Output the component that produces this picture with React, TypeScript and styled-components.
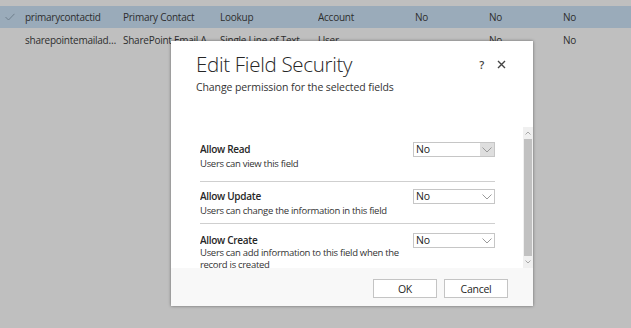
import React from "react";
import styled, { createGlobalStyle } from "styled-components";

const Global = createGlobalStyle`
  html, body { margin: 0; padding: 0; }
  body { background: #bfbfbf; font-family: "Open Sans", "Liberation Sans", sans-serif; letter-spacing: -0.25px; }
  #root { width: 631px; height: 328px; }
`;

const Page = styled.div`
  position: relative;
  width: 631px;
  height: 328px;
  overflow: hidden;
  background: #bfbfbf;
  padding-top: 6px;
  box-sizing: border-box;
`;

const Row = styled.div<{ $selected?: boolean }>`
  display: grid;
  grid-template-columns: 25px 98px 97px 98px 97px 74px 74px 1fr;
  height: 22px;
  align-items: center;
  background: ${(p) => (p.$selected ? "#9aabba" : "transparent")};
  & + & { height: 24px; }
`;

const Cell = styled.div`
  font-size: 10px;
  color: #2e2e2e;
  white-space: nowrap;
  overflow: hidden;
  text-overflow: ellipsis;
  padding-right: 4px;
`;

const CheckCell = styled.div`
  display: flex;
  align-items: center;
  justify-content: center;
  padding-right: 6px;
`;

const Dialog = styled.div`
  position: absolute;
  left: 171px;
  top: 41px;
  width: 362px;
  height: 265px;
  background: #ffffff;
  box-shadow: 0 0 3px rgba(0, 0, 0, 0.45);
  display: flex;
  flex-direction: column;
`;

const Header = styled.div`
  position: relative;
  padding: 8px 25px 0 25px;
  height: 78px;
  box-sizing: border-box;
`;

const Title = styled.h1`
  margin: 0;
  font-weight: 300;
  font-size: 20.5px;
  line-height: 30px;
  color: #262626;
  letter-spacing: -0.3px;
`;

const Subtitle = styled.p`
  margin: 0;
  font-size: 10.5px;
  line-height: 16px;
  color: #333;
  letter-spacing: -0.1px;
`;

const HeaderIcons = styled.div`
  position: absolute;
  top: 16px;
  right: 27px;
  display: flex;
  gap: 13px;
  align-items: center;
  color: #444;
  font-size: 11px;
  font-weight: 600;
`;

const Body = styled.div`
  height: 141px;
  display: flex;
  padding-left: 29px;
  margin-top: 8px;
`;

const Sections = styled.div`
  flex: 1;
  margin-right: 28px;
  overflow: hidden;
`;

const Label = styled.div`
  font-weight: 600;
  font-size: 10px;
  line-height: 15px;
  color: #262626;
  letter-spacing: -0.3px;
`;

const Desc = styled.div`
  font-size: 9.5px;
  line-height: 12px;
  color: #333;
  margin-top: 1px;
  max-width: 205px;
  letter-spacing: -0.3px;
`;

const Section = styled.div`
  display: grid;
  grid-template-columns: 1fr 82px;
  padding: 7px 0 6px;
  border-bottom: 1px solid #cfcfcf;
  &:first-child { padding: 15px 0 11px; }
  &:last-child { border-bottom: none; padding-top: 9px; }
  &:last-child ${Desc} { margin-top: -1px; }
`;

const Select = styled.div<{ $hover?: boolean }>`
  width: 82px;
  height: 15px;
  box-sizing: border-box;
  border: 1px solid #c6c6c6;
  display: flex;
  align-items: stretch;
  font-size: 10.5px;
  color: #222;
  & > span {
    flex: 1;
    padding-left: 2px;
    line-height: 13px;
  }
  & > i {
    width: 14px;
    display: flex;
    align-items: center;
    justify-content: center;
    background: ${(p) => (p.$hover ? "#dedede" : "transparent")};
  }
`;

const Scrollbar = styled.div`
  width: 10px;
  display: flex;
  flex-direction: column;
  background: #f0f0f0;
`;

const Arrow = styled.div`
  height: 12px;
  display: flex;
  align-items: center;
  justify-content: center;
`;

const Thumb = styled.div`
  flex: 1;
  background: #c1c1c1;
  margin: 0 1px;
`;

const Footer = styled.div`
  flex: 1;
  background: #f8f8f8;
  display: flex;
  justify-content: flex-end;
  align-items: flex-start;
  padding: 11px 25px 0 0;
  gap: 7px;
`;

const Button = styled.button`
  width: 64px;
  height: 19px;
  background: #ffffff;
  border: 1px solid #c4c4c4;
  font-family: inherit;
  font-size: 10.5px;
  letter-spacing: inherit;
  color: #262626;
  padding: 0;
`;

const Chevron = () => (
  <svg width="10" height="6" viewBox="0 0 10 6">
    <path d="M0.5 0.5 L5 5 L9.5 0.5" fill="none" stroke="#9a9a9a" strokeWidth="1" />
  </svg>
);

const SmallArrow = ({ up }: { up?: boolean }) => (
  <svg width="6" height="4" viewBox="0 0 6 4">
    <path d={up ? "M0.5 3.5 L3 1 L5.5 3.5" : "M0.5 0.5 L3 3 L5.5 0.5"} fill="none" stroke="#a8a8a8" strokeWidth="1" />
  </svg>
);

const rows = [
  { sel: true, cells: ["primarycontactid", "Primary Contact", "Lookup", "Account", "No", "No", "No"] },
  { sel: false, cells: ["sharepointemailaddr...", "SharePoint Email Ad...", "Single Line of Text", "User", "", "No", "No"] },
];

const sections = [
  { label: "Allow Read", desc: "Users can view this field", hover: true },
  { label: "Allow Update", desc: "Users can change the information in this field" },
  { label: "Allow Create", desc: "Users can add information to this field when the record is created" },
];

export default function App() {
  return (
    <>
      <Global />
      <Page>
        {rows.map((r, i) => (
          <Row key={i} $selected={r.sel}>
            <CheckCell>
              {r.sel && (
                <svg width="10" height="8" viewBox="0 0 10 8">
                  <path d="M0.5 4 L3.5 7 L9.5 0.8" fill="none" stroke="#6f7f8c" strokeWidth="1" />
                </svg>
              )}
            </CheckCell>
            {r.cells.map((c, j) => (
              <Cell key={j}>{c}</Cell>
            ))}
          </Row>
        ))}
        <Dialog>
          <Header>
            <Title>Edit Field Security</Title>
            <Subtitle>Change permission for the selected fields</Subtitle>
            <HeaderIcons>
              <span>?</span>
              <svg width="9" height="9" viewBox="0 0 9 9">
                <path d="M1 1 L8 8 M8 1 L1 8" stroke="#444" strokeWidth="1.4" />
              </svg>
            </HeaderIcons>
          </Header>
          <Body>
            <Sections>
              {sections.map((s) => (
                <Section key={s.label}>
                  <div>
                    <Label>{s.label}</Label>
                    <Desc>{s.desc}</Desc>
                  </div>
                  <Select $hover={s.hover}>
                    <span>No</span>
                    <i><Chevron /></i>
                  </Select>
                </Section>
              ))}
            </Sections>
            <Scrollbar>
              <Arrow><SmallArrow up /></Arrow>
              <Thumb />
              <Arrow><SmallArrow /></Arrow>
            </Scrollbar>
          </Body>
          <Footer>
            <Button>OK</Button>
            <Button>Cancel</Button>
          </Footer>
        </Dialog>
      </Page>
    </>
  );
}
